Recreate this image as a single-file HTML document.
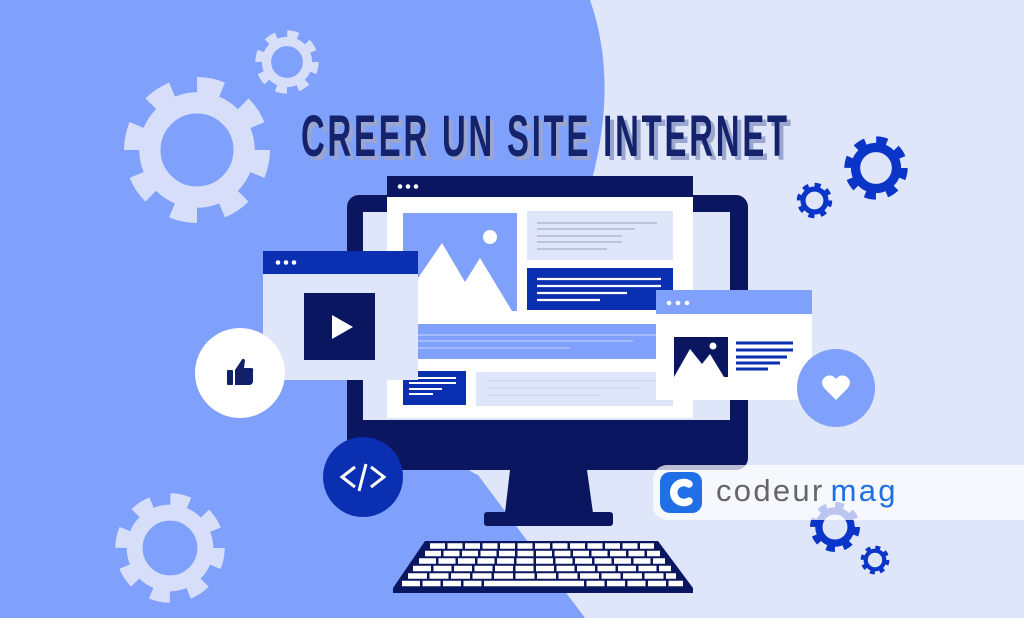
<!DOCTYPE html>
<html><head><meta charset="utf-8"><style>
html,body{margin:0;padding:0;width:1024px;height:618px;overflow:hidden;background:#dfe6fa}
svg{display:block}
</style></head><body>
<svg width="1024" height="618" viewBox="0 0 1024 618" xmlns="http://www.w3.org/2000/svg">
<defs>
<symbol id="gear" viewBox="-50 -50 100 100">
<circle r="31" fill="none" stroke="currentColor" stroke-width="14"/>
<circle r="42" fill="none" stroke="currentColor" stroke-width="12" stroke-dasharray="16.49 16.49"/>
</symbol>
</defs>
<rect width="1024" height="618" fill="#dfe6fa"/>
<path d="M0,0 L590,0 C625,100 600,230 480,410 C450,450 460,468 478,475 L585,618 L0,618 Z" fill="#7fa0fb"/>

<!-- light gears -->
<use href="#gear" x="121" y="74" width="152" height="152" color="#d6defa"/>
<use href="#gear" x="254" y="29" width="66" height="66" color="#d6defa"/>
<use href="#gear" x="113" y="491" width="114" height="114" color="#d6defa"/>
<!-- blue gears -->
<use href="#gear" x="843" y="135" width="66" height="66" color="#0a35c8"/>
<use href="#gear" x="796" y="182" width="37" height="37" color="#0a35c8"/>
<use href="#gear" x="809" y="501" width="52" height="52" color="#0a35c8"/>
<use href="#gear" x="860" y="545" width="30" height="30" color="#0a35c8"/>

<!-- title -->
<g font-family="Liberation Sans, sans-serif" font-weight="bold" font-size="58" letter-spacing="5">
<text x="0" y="0" transform="translate(305,160) scale(0.566,1)" fill="#9aa6cf">CREER UN SITE INTERNET</text>
<text x="0" y="0" transform="translate(301,156) scale(0.566,1)" fill="#14236b">CREER UN SITE INTERNET</text>
</g>

<!-- monitor -->
<rect x="347" y="195" width="401" height="275" rx="12" fill="#0b1660"/>
<rect x="363" y="212" width="367" height="208" fill="#dfe6fa"/>
<polygon points="510,470 587,470 593,513 505,513" fill="#0b1660"/>
<rect x="484" y="512" width="129" height="14" rx="3" fill="#0b1660"/>

<!-- keyboard -->
<polygon points="425,541 658,541 693,588 693,593 393,593 393,588" fill="#0b1660"/>
<g stroke="#fff" stroke-width="5.5">
<line x1="430" y1="546" x2="654" y2="546" stroke-dasharray="15 2.5"/>
<line x1="425" y1="553.5" x2="660" y2="553.5" stroke-dasharray="16 2.5"/>
<line x1="419" y1="561" x2="665" y2="561" stroke-dasharray="17 2.5"/>
<line x1="413" y1="568.5" x2="671" y2="568.5" stroke-dasharray="18 2.5"/>
<line x1="408" y1="576" x2="676" y2="576" stroke-dasharray="19 2.5"/>
<line x1="402" y1="583.5" x2="683" y2="583.5" stroke-dasharray="18 2.5 18 2.5 18 2.5 18 2.5 100 2.5 18 2.5 18 2.5 18 2.5 18 2.5 40"/>
</g>

<!-- main browser window -->
<rect x="387" y="176" width="306" height="21" fill="#0b1660"/>
<circle cx="400" cy="186.5" r="2.3" fill="#fff"/><circle cx="408" cy="186.5" r="2.3" fill="#fff"/><circle cx="416" cy="186.5" r="2.3" fill="#fff"/>
<rect x="387" y="197" width="306" height="221" fill="#fff"/>
<rect x="403" y="213" width="114" height="98" fill="#7fa0fb"/>
<circle cx="490" cy="237" r="7" fill="#fff"/>
<polygon points="403,300 442,243 465,282 480,258 512,311 403,311" fill="#fff"/>
<rect x="527" y="211" width="146" height="49" fill="#dfe6fa"/>
<g stroke="#9aa3c0" stroke-width="1">
<line x1="537" y1="223" x2="657" y2="223"/><line x1="537" y1="229" x2="635" y2="229"/><line x1="537" y1="236" x2="622" y2="236"/><line x1="537" y1="242" x2="622" y2="242"/><line x1="537" y1="249" x2="607" y2="249"/>
</g>
<rect x="527" y="268" width="146" height="42" fill="#0a2fb0"/>
<g stroke="#fff" stroke-width="2.2">
<line x1="537" y1="279" x2="661" y2="279"/><line x1="537" y1="286" x2="661" y2="286"/><line x1="537" y1="293" x2="627" y2="293"/><line x1="537" y1="300" x2="600" y2="300"/>
</g>
<rect x="415" y="324" width="278" height="35" fill="#7fa0fb"/>
<g stroke="#c8d4fb" stroke-width="1">
<line x1="415" y1="335" x2="693" y2="335"/><line x1="415" y1="341" x2="633" y2="341"/><line x1="415" y1="348" x2="570" y2="348"/>
</g>
<rect x="403" y="371" width="63" height="34" fill="#0a2fb0"/>
<g stroke="#fff" stroke-width="2">
<line x1="409" y1="378" x2="456" y2="378"/><line x1="409" y1="383" x2="456" y2="383"/><line x1="409" y1="389" x2="442" y2="389"/><line x1="409" y1="394" x2="433" y2="394"/>
</g>
<rect x="476" y="372" width="197" height="34" fill="#dfe6fa"/>
<g stroke="#c9d2ee" stroke-width="1">
<line x1="487" y1="381" x2="660" y2="381"/><line x1="487" y1="388" x2="640" y2="388"/><line x1="487" y1="395" x2="600" y2="395"/>
</g>

<!-- video window -->
<rect x="263" y="251" width="155" height="23" fill="#0a2fb0"/>
<circle cx="278" cy="262.5" r="2.3" fill="#fff"/><circle cx="286" cy="262.5" r="2.3" fill="#fff"/><circle cx="294" cy="262.5" r="2.3" fill="#fff"/>
<rect x="263" y="274" width="155" height="106" fill="#dfe6fa"/>
<rect x="304" y="293" width="71" height="67" fill="#0b1660"/>
<polygon points="332,315 353,327 332,339" fill="#fff"/>

<!-- right window -->
<rect x="656" y="290" width="156" height="24" fill="#7fa0fb"/>
<circle cx="669" cy="303" r="2.3" fill="#fff"/><circle cx="678" cy="303" r="2.3" fill="#fff"/><circle cx="687" cy="303" r="2.3" fill="#fff"/>
<rect x="656" y="314" width="156" height="86" fill="#fff"/>
<rect x="674" y="337" width="54" height="40" fill="#0b1660"/>
<circle cx="713" cy="346" r="3.5" fill="#fff"/>
<polygon points="674,377 690,349 702,364 710,354 724,377" fill="#fff"/>
<g stroke="#0a2fb0" stroke-width="3">
<line x1="736" y1="343" x2="793" y2="343"/><line x1="736" y1="350" x2="793" y2="350"/><line x1="736" y1="357" x2="787" y2="357"/><line x1="736" y1="363" x2="780" y2="363"/><line x1="736" y1="369" x2="768" y2="369"/>
</g>

<!-- circles -->
<circle cx="240" cy="373" r="45" fill="#fff"/>
<g fill="#12206a">
<rect x="227" y="370" width="6" height="15" rx="1"/>
<path d="M235,370 L241,361 Q243,357 245,360 L244,368 L251,368 Q254,368 253,371 L253,382 Q252,385 249,385 L235,385 Z"/>
</g>
<circle cx="363" cy="477" r="40" fill="#0a2fb0"/>
<g stroke="#fff" stroke-width="3" fill="none">
<polyline points="355,467 342,477 355,487"/><polyline points="371,467 384,477 371,487"/><line x1="366" y1="464" x2="359" y2="491"/>
</g>
<circle cx="836" cy="388" r="39" fill="#7fa0fb"/>
<path d="M836,400 L825,389 Q819,382 825,377 Q831,373 836,379 Q841,373 847,377 Q853,382 847,389 Z" fill="#fff"/>

<!-- logo bar -->
<rect x="653" y="465" width="400" height="55" rx="14" fill="#ffffff" fill-opacity="0.72"/>
<rect x="660" y="472" width="42" height="41" rx="10" fill="#1f6fe6"/>
<path d="M689,484 A10,10 0 1 0 689,501" fill="none" stroke="#fff" stroke-width="7.5" stroke-linecap="round"/>
<text x="716" y="501" font-family="Liberation Sans, sans-serif" font-size="31" letter-spacing="2.3" fill="#666"><tspan>codeur</tspan><tspan fill="#1f6fe6" dx="6">mag</tspan></text>
</svg>
</body></html>
